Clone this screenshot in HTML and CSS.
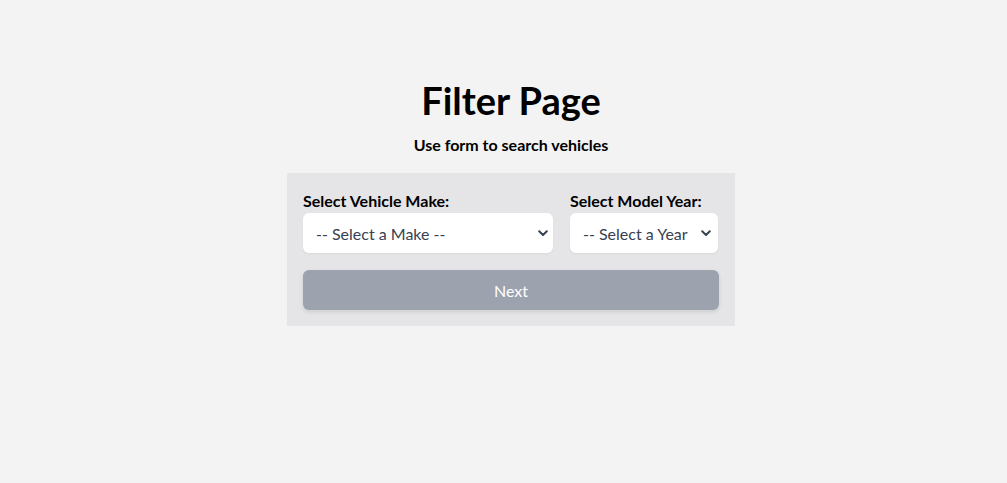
FILE: index.html
```html
<!DOCTYPE html>
<html>
<head>
<meta charset="utf-8">
<link rel="stylesheet" href="styles.css">
</head>
<body>
<main class="page">
  <h1 class="title">Filter Page</h1>
  <p class="subtitle">Use form to search vehicles</p>
  <form class="panel">
    <div class="row">
      <div class="field field-make">
        <label class="label">Select Vehicle Make:</label>
        <div class="select-wrap">
          <select class="select"><option>-- Select a Make --</option></select>
          <svg class="chev" width="10" height="7" viewBox="0 0 10 7"><path d="M1.2 1.3 L5 5 L8.8 1.3" fill="none" stroke="#374151" stroke-width="2" stroke-linecap="round" stroke-linejoin="round"/></svg>
        </div>
      </div>
      <div class="field field-year">
        <label class="label">Select Model Year:</label>
        <div class="select-wrap">
          <select class="select"><option>-- Select a Year --</option></select>
          <svg class="chev" width="10" height="7" viewBox="0 0 10 7"><path d="M1.2 1.3 L5 5 L8.8 1.3" fill="none" stroke="#374151" stroke-width="2" stroke-linecap="round" stroke-linejoin="round"/></svg>
        </div>
      </div>
    </div>
    <button type="button" class="btn">Next</button>
  </form>
</main>
</body>
</html>
```
FILE: styles.css
```css
html, body {
  margin: 0;
  padding: 0;
  background: #f3f3f3;
  font-family: Lato, "Open Sans", sans-serif;
  color: #000;
}
.page {
  display: flex;
  flex-direction: column;
  align-items: center;
  padding: 80px 0 0 15px;
}
.title {
  margin: 0;
  font-size: 38px;
  line-height: 40px;
  font-weight: 700;
}
.subtitle {
  margin: 13px 0 16px;
  font-size: 16px;
  line-height: 24px;
  font-weight: 700;
}
.panel {
  box-sizing: border-box;
  width: 448px;
  background: #e5e5e7;
  padding: 16px;
  display: flex;
  flex-direction: column;
  gap: 17px;
}
.row {
  display: flex;
  gap: 17px;
}
.field {
  display: flex;
  flex-direction: column;
}
.field-make { width: 250px; }
.field-year { width: 148px; }
.label {
  font-size: 16px;
  line-height: 24px;
  font-weight: 700;
  white-space: nowrap;
}
.select-wrap {
  position: relative;
}
.select {
  appearance: none;
  -webkit-appearance: none;
  box-sizing: border-box;
  width: 100%;
  height: 40px;
  border: none;
  border-radius: 6px;
  background: #fff;
  padding: 0 27px 0 13px;
  font-family: Lato, "Open Sans", sans-serif;
  font-size: 16px;
  color: #374151;
  box-shadow: 0 1px 2px rgba(0,0,0,0.05);
  outline: none;
}
.chev {
  position: absolute;
  right: 5px;
  top: 17px;
  pointer-events: none;
}
.field-make .chev { right: 5px; }
.field-year .chev { right: 7px; }
.btn {
  height: 40px;
  border: none;
  border-radius: 6px;
  background: #9ca3af;
  color: #fff;
  font-family: Lato, "Open Sans", sans-serif;
  font-size: 16px;
  box-shadow: 0 2px 4px rgba(0,0,0,0.1);
}
```
